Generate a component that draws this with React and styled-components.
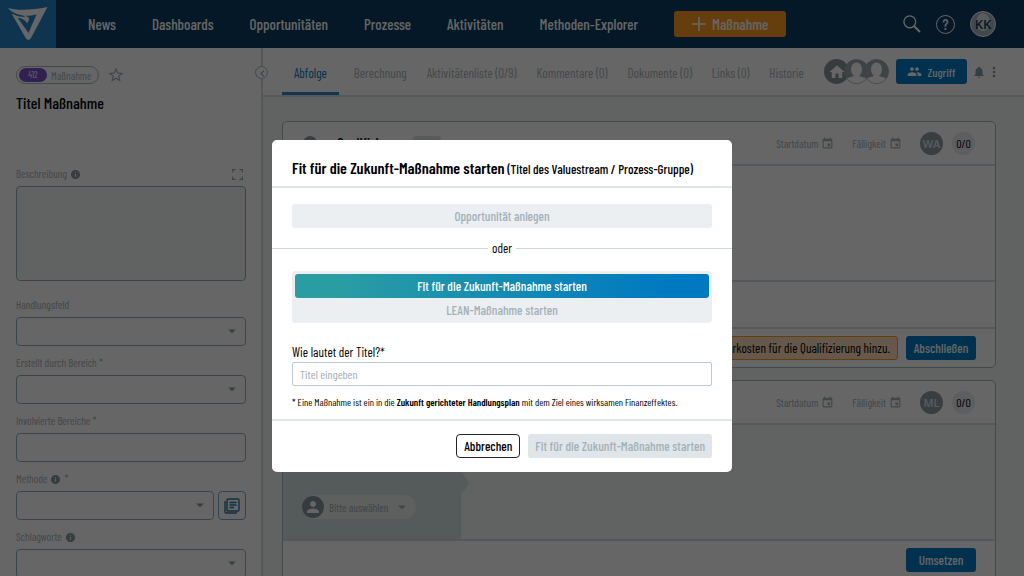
import React, { useState } from "react";
import styled, { createGlobalStyle } from "styled-components";
import {
  MdArrowDropDown,
  MdChevronLeft,
  MdEvent,
  MdHome,
  MdInfo,
  MdMoreVert,
  MdNotifications,
  MdPeople,
  MdPerson,
  MdStarBorder,
} from "react-icons/md";

const NAV = ["News", "Dashboards", "Opportunitäten", "Prozesse", "Aktivitäten", "Methoden-Explorer"];

const TABS = [
  "Abfolge",
  "Berechnung",
  "Aktivitätenliste (0/9)",
  "Kommentare (0)",
  "Dokumente (0)",
  "Links (0)",
  "Historie",
];

function Logo() {
  return (
    <svg width="40" height="34" viewBox="0 0 40 34" aria-hidden="true">
      <path
        fill="#fff"
        fillRule="evenodd"
        d="M0 1C10 4 25 3 39.500 0L23 31Q20.500 34.500 18 31.500L3.500 6.500C8 9 13 10 17.500 10L15 8.500C9 7.500 3 5 0 1ZM9.500 10.500L20.500 26L28.500 7.500C25 8.500 20 9 17 8.800C20 9.500 21.500 11 21 13L19 16.500C17.500 13 14 11.500 9.500 10.500Z"
      />
    </svg>
  );
}

function SearchIcon() {
  return (
    <svg width="18" height="18" viewBox="0 0 18 18" fill="none" stroke="currentColor" strokeWidth="1.400">
      <circle cx="6.800" cy="6.800" r="5.900" />
      <path d="M11 11l6 6" strokeWidth="2" />
    </svg>
  );
}

function PlusIcon() {
  return (
    <svg width="14" height="14" viewBox="0 0 14 14" stroke="currentColor" strokeWidth="1.600">
      <path d="M7 0v14M0 7h14" />
    </svg>
  );
}

function ExpandIcon() {
  return (
    <svg width="11" height="11" viewBox="0 0 11 11" fill="none" stroke="currentColor" strokeWidth="1.200">
      <path d="M.6 3.500V.6h2.900M7.500.6h2.900v2.900M10.400 7.500v2.900H7.500M3.500 10.400H.6V7.500" />
    </svg>
  );
}

function LibraryIcon() {
  return (
    <svg width="16" height="16" viewBox="0 0 16 16" fill="none" stroke="currentColor" strokeWidth="1.400">
      <rect x="3" y="1" width="12" height="12" rx="1" />
      <path d="M1 3v11q0 1 1 1h11M5.500 4.500h7M5.500 7h7M5.500 9.500h4.500" />
    </svg>
  );
}

function Face() {
  return (
    <svg width="25" height="25" viewBox="0 0 25 25" aria-hidden="true">
      <circle cx="12.500" cy="12.500" r="12" fill="#9caab0" stroke="#9caab0" />
      <path d="M3 19.500C6 17.500 10 18 10 16h5c0 2 4 1.500 7 3.500A12 12 0 0 1 3 19.500Z" fill="#fff" />
      <ellipse cx="12.500" cy="10.500" rx="5.500" ry="7" fill="#fff" />
    </svg>
  );
}

function Field({ id, label, info, required, kind = "select", action }) {
  return (
    <FieldBlock>
      <FieldLabel htmlFor={id}>
        {label}
        {info && <MdInfo size={11} />}
        {required && " *"}
      </FieldLabel>
      <FieldRow>
        {kind === "select" ? (
          <SelectBox>
            <Select id={id} defaultValue="">
              <option value=""></option>
            </Select>
            <MdArrowDropDown size={18} />
          </SelectBox>
        ) : (
          <TextBox id={id} type="text" />
        )}
        {action}
      </FieldRow>
    </FieldBlock>
  );
}

function StepHeader({ title, initials }) {
  return (
    <CardHeader>
      <StepDot />
      <StepTitle>{title}</StepTitle>
      <StepChip />
      <DateButton type="button">
        Startdatum <MdEvent size={13} />
      </DateButton>
      <DateButton type="button">
        Fälligkeit <MdEvent size={13} />
      </DateButton>
      <Owner>{initials}</Owner>
      <Counter>0/0</Counter>
    </CardHeader>
  );
}

function StartDialog() {
  const [mode, setMode] = useState("zukunft");
  const [title, setTitle] = useState("");

  return (
    <Overlay>
      <Dialog role="dialog" aria-modal="true" aria-labelledby="dialog-title">
        <DialogHeader>
          <DialogTitle id="dialog-title">
            Fit für die Zukunft-Maßnahme starten<small> (Titel des Valuestream / Prozess-Gruppe)</small>
          </DialogTitle>
        </DialogHeader>
        <DialogTop>
          <WideButton type="button">Opportunität anlegen</WideButton>
        </DialogTop>
        <Divider>oder</Divider>
        <DialogBody>
          <Switcher>
            <SwitchOption type="button" $active={mode === "zukunft"} onClick={() => setMode("zukunft")}>
              Fit für die Zukunft-Maßnahme starten
            </SwitchOption>
            <SwitchOption type="button" $active={mode === "lean"} onClick={() => setMode("lean")}>
              LEAN-Maßnahme starten
            </SwitchOption>
          </Switcher>
          <TitleLabel htmlFor="title">Wie lautet der Titel?*</TitleLabel>
          <TitleInput
            id="title"
            type="text"
            placeholder="Titel eingeben"
            value={title}
            onChange={(e) => setTitle(e.target.value)}
          />
          <Note>
            * Eine Maßnahme ist ein in die <b>Zukunft gerichteter Handlungsplan</b> mit dem Ziel eines wirksamen
            Finanzeffektes.
          </Note>
        </DialogBody>
        <DialogFooter>
          <CancelButton type="button">Abbrechen</CancelButton>
          <SubmitButton type="submit" disabled={!title}>
            Fit für die Zukunft-Maßnahme starten
          </SubmitButton>
        </DialogFooter>
      </Dialog>
    </Overlay>
  );
}

export default function App() {
  return (
    <Page>
      <GlobalStyle />
      <TopBar>
        <LogoLink href="#" aria-label="Start">
          <Logo />
        </LogoLink>
        <Nav>
          {NAV.map((item) => (
            <a key={item} href="#">
              {item}
            </a>
          ))}
        </Nav>
        <CreateButton type="button">
          <PlusIcon /> Maßnahme
        </CreateButton>
        <TopActions>
          <IconButton type="button" aria-label="Suche">
            <SearchIcon />
          </IconButton>
          <HelpButton type="button">?</HelpButton>
          <Profile type="button">KK</Profile>
        </TopActions>
      </TopBar>

      <Columns>
        <Sidebar>
          <Meta>
            <Pill>
              <PillId>412</PillId> Maßnahme
            </Pill>
            <IconButton type="button" aria-label="Favorit">
              <MdStarBorder size={18} />
            </IconButton>
          </Meta>
          <SideTitle>Titel Maßnahme</SideTitle>
          <FieldBlock>
            <LabelRow>
              <FieldLabel htmlFor="beschreibung">
                Beschreibung <MdInfo size={11} />
              </FieldLabel>
              <IconButton type="button" aria-label="Vergrößern">
                <ExpandIcon />
              </IconButton>
            </LabelRow>
            <Description id="beschreibung" />
          </FieldBlock>
          <Fields>
            <Field id="handlungsfeld" label="Handlungsfeld" />
            <Field id="bereich" label="Erstellt durch Bereich" required />
            <Field id="bereiche" label="Involvierte Bereiche" required kind="text" />
            <Field
              id="methode"
              label="Methode"
              info
              required
              action={
                <LibraryButton type="button" aria-label="Methoden">
                  <LibraryIcon />
                </LibraryButton>
              }
            />
            <Field id="schlagworte" label="Schlagworte" info />
          </Fields>
          <Collapse type="button" aria-label="Einklappen">
            <MdChevronLeft size={13} />
          </Collapse>
        </Sidebar>

        <Main>
          <TabBar>
            <Tabs>
              {TABS.map((tab, i) => (
                <Tab key={tab} href="#" $active={i === 0}>
                  {tab}
                </Tab>
              ))}
            </Tabs>
            <Avatars>
              <HomeAvatar>
                <MdHome size={18} />
              </HomeAvatar>
              <Face />
              <Face />
            </Avatars>
            <AccessButton type="button">
              <MdPeople size={15} /> Zugriff
            </AccessButton>
            <TabActions>
              <IconButton type="button" aria-label="Benachrichtigungen">
                <MdNotifications size={14} />
              </IconButton>
              <IconButton type="button" aria-label="Mehr">
                <MdMoreVert size={16} />
              </IconButton>
            </TabActions>
          </TabBar>

          <Content>
            <Card>
              <StepHeader title="Qualifizierung" initials="WA" />
              <CardBody />
              <CardRow />
              <CardFooter>
                <Hint>Mehrkosten für die Qualifizierung hinzu.</Hint>
                <ActionButton type="button">Abschließen</ActionButton>
              </CardFooter>
            </Card>
            <Card>
              <StepHeader initials="ML" />
              <CardBody $muted>
                <Assign>
                  <AssignButton type="button">
                    <AssignIcon>
                      <MdPerson size={18} />
                    </AssignIcon>
                    Bitte auswählen
                    <MdArrowDropDown size={18} />
                  </AssignButton>
                  <Arrow width="8" height="24" viewBox="0 0 8 24">
                    <path d="M0 0L8 12L0 24Z" fill="currentColor" />
                  </Arrow>
                </Assign>
              </CardBody>
              <CardFooter>
                <ActionButton type="button">Umsetzen</ActionButton>
              </CardFooter>
            </Card>
          </Content>
        </Main>
      </Columns>

      <StartDialog />
    </Page>
  );
}

const GlobalStyle = createGlobalStyle`
  * {
    box-sizing: border-box;
  }
  body {
    margin: 0;
  }
  body, button, input, select, textarea {
    font-family: "Barlow Condensed", "Roboto Condensed", "Liberation Sans Narrow", "Liberation Sans", sans-serif;
  }
  button {
    padding: 0;
    border: 0;
    background: none;
    color: inherit;
    cursor: pointer;
  }
  a {
    color: inherit;
    text-decoration: none;
  }
`;

const Page = styled.div`
  height: 100vh;
  display: flex;
  flex-direction: column;
  overflow: hidden;
  background: #fff;
`;

const TopBar = styled.header`
  flex: none;
  height: 48px;
  display: flex;
  align-items: center;
  background: #0a3d61;
  color: #fff;
`;

const LogoLink = styled.a`
  width: 56px;
  height: 48px;
  display: grid;
  place-items: center;
  background: #2382c8;
`;

const Nav = styled.nav`
  display: flex;
  gap: 36px;
  margin: 0 36px 0 32px;
  font-size: 15px;
  font-weight: 500;
  white-space: nowrap;
`;

const CreateButton = styled.button`
  width: 112px;
  height: 26px;
  display: flex;
  align-items: center;
  justify-content: center;
  gap: 6px;
  border-radius: 3px;
  background: #ff9820;
  color: #fff;
  font-size: 15px;
  font-weight: 500;
`;

const TopActions = styled.div`
  display: flex;
  align-items: center;
  gap: 15px;
  margin-left: auto;
  padding-right: 28px;
`;

const IconButton = styled.button`
  display: grid;
  place-items: center;
`;

const HelpButton = styled.button`
  width: 19px;
  height: 19px;
  border: 1px solid #fff;
  border-radius: 50%;
  font-size: 15px;
  font-weight: 500;
  line-height: 16px;
`;

const Profile = styled.button`
  width: 26px;
  height: 26px;
  border: 1px solid #fff;
  border-radius: 50%;
  background: radial-gradient(ellipse 7px 9px at 50% 42%, #dfe5e8 95%, #a9b6bb);
  color: #0a3d61;
  font-family: "Open Sans", sans-serif;
  font-size: 13px;
  font-weight: 600;
`;

const Columns = styled.div`
  flex: 1;
  min-height: 0;
  display: flex;
`;

const Sidebar = styled.aside`
  position: relative;
  flex: none;
  width: 263px;
  padding: 18px 15px 0 16px;
  border-right: 2px solid #d5dde1;
`;

const Collapse = styled.button`
  position: absolute;
  top: 18px;
  right: -7px;
  width: 13px;
  height: 13px;
  display: grid;
  place-items: center;
  border: 1px solid #a9b8bf;
  border-radius: 50%;
  background: #fff;
  color: #97a7ae;
`;

const Meta = styled.div`
  display: flex;
  align-items: center;
  gap: 8px;
  color: #a5b0b5;
`;

const Pill = styled.span`
  height: 18px;
  display: flex;
  align-items: center;
  gap: 4px;
  padding: 0 7px 0 2px;
  border: 1px solid #a9bbb9;
  border-radius: 9px;
  font-size: 11px;
`;

const PillId = styled.span`
  width: 28px;
  border-radius: 7px;
  background: #7c50c8;
  color: #fff;
  font-size: 9px;
  line-height: 14px;
  text-align: center;
`;

const SideTitle = styled.h1`
  margin: 8px 0 52px;
  font-size: 16px;
  line-height: 22px;
  font-weight: 500;
`;

const LabelRow = styled.div`
  display: flex;
  justify-content: space-between;
  align-items: center;
  padding-right: 3px;
  color: #9aa9b0;
`;

const FieldBlock = styled.div`
  display: flex;
  flex-direction: column;
  gap: 4px;
`;

const FieldLabel = styled.label`
  display: flex;
  align-items: center;
  gap: 3px;
  color: #a5b2b8;
  font-size: 11px;
  line-height: 16px;

  svg {
    color: #8b9ca5;
  }
`;

const Fields = styled.div`
  display: flex;
  flex-direction: column;
  gap: 9px;
  margin-top: 16px;
`;

const FieldRow = styled.div`
  display: flex;
  gap: 4px;
`;

const boxBorder = "1px solid #97afba";

const Description = styled.textarea`
  height: 95px;
  border: ${boxBorder};
  border-radius: 4px;
  background: #f3f8f6;
  resize: none;
`;

const TextBox = styled.input`
  width: 100%;
  height: 29px;
  border: ${boxBorder};
  border-radius: 4px;
  background: #fff;
`;

const SelectBox = styled.div`
  position: relative;
  flex: 1;

  svg {
    position: absolute;
    top: 5px;
    right: 5px;
    color: #8b9ca5;
    pointer-events: none;
  }
`;

const Select = styled.select`
  display: block;
  width: 100%;
  height: 29px;
  appearance: none;
  border: ${boxBorder};
  border-radius: 4px;
  background: #fff;
`;

const LibraryButton = styled.button`
  width: 28px;
  height: 29px;
  display: grid;
  place-items: center;
  border: 1px solid #77a9c8;
  border-radius: 4px;
  color: #2a78a8;
`;

const Main = styled.main`
  flex: 1;
  min-width: 0;
  background: #f3f8f6;
`;

const TabBar = styled.div`
  height: 49px;
  display: flex;
  align-items: center;
  padding: 0 22px 0 19px;
  border-bottom: 2px solid #d5dde1;
  background: #fff;
`;

const Tabs = styled.nav`
  align-self: stretch;
  display: flex;
  gap: 20px;
  white-space: nowrap;
`;

const Tab = styled.a`
  padding: ${(p) => (p.$active ? "0 12px" : "0")};
  margin-right: ${(p) => (p.$active ? "-5px" : "0")};
  border-bottom: 3px solid ${(p) => (p.$active ? "#2b8ac6" : "transparent")};
  color: ${(p) => (p.$active ? "#0079c0" : "#a9b4b9")};
  font-size: 13px;
  font-weight: 400;
  line-height: 50px;
`;

const Avatars = styled.div`
  display: flex;
  margin-left: auto;

  svg + svg {
    margin-left: -5px;
  }
`;

const HomeAvatar = styled.span`
  width: 25px;
  height: 25px;
  display: grid;
  place-items: center;
  margin-right: -5px;
  border-radius: 50%;
  background: #87969c;
  color: #fff;
`;

const AccessButton = styled.button`
  width: 71px;
  height: 25px;
  display: flex;
  align-items: center;
  justify-content: center;
  gap: 5px;
  margin: 0 5px 0 7px;
  border-radius: 3px;
  background: #007ac2;
  color: #fff;
  font-size: 12px;
  font-weight: 500;
`;

const TabActions = styled.div`
  display: flex;
  align-items: center;
  color: #8b9ca5;
`;

const Content = styled.div`
  display: flex;
  flex-direction: column;
  gap: 12px;
  padding: 24px 28px 0 19px;
`;

const Card = styled.section`
  border: 1px solid #a9b9bd;
  border-radius: 5px;
  background: #fff;
  overflow: hidden;
`;

const CardHeader = styled.header`
  height: 44px;
  display: flex;
  align-items: center;
  padding: 0 20px;
  border-bottom: 2px solid #d5dde1;
`;

const StepDot = styled.span`
  width: 14px;
  height: 14px;
  border-radius: 50%;
  background: #8b9ca5;
`;

const StepTitle = styled.h2`
  width: 76px;
  margin: 0 0 0 20px;
  font-size: 15px;
  font-weight: 500;
`;

const StepChip = styled.span`
  width: 28px;
  height: 14px;
  margin-right: auto;
  border-radius: 3px;
  background: #dbe2e6;
`;

const DateButton = styled.button`
  display: flex;
  align-items: center;
  gap: 3px;
  margin-right: 18px;
  color: #a3afb4;
  font-size: 11px;
`;

const Owner = styled.span`
  width: 23px;
  border-radius: 50%;
  background: #8e9da3;
  color: #dfe6e9;
  font-family: "Open Sans", sans-serif;
  font-size: 11px;
  font-weight: 600;
  line-height: 23px;
  text-align: center;
`;

const Counter = styled.span`
  width: 23px;
  margin-left: 9px;
  border-radius: 50%;
  background: #e6eaee;
  font-size: 12px;
  line-height: 23px;
  text-align: center;
`;

const CardBody = styled.div`
  height: 116px;
  display: flex;
  border-bottom: 2px solid #d5dde1;
  background: ${(p) => (p.$muted ? "#f3f8f6" : "#fff")};
`;

const CardRow = styled.div`
  height: 47px;
  border-bottom: 2px solid #d5dde1;
`;

const CardFooter = styled.footer`
  display: flex;
  justify-content: flex-end;
  align-items: center;
  gap: 8px;
  padding: 7px 19px;
`;

const Hint = styled.span`
  padding: 0 7px;
  border: 1px solid #ff9820;
  border-radius: 3px;
  background: #ffdcb8;
  font-size: 13px;
  line-height: 22px;
`;

const ActionButton = styled.button`
  width: 70px;
  height: 24px;
  border-radius: 3px;
  background: #007ac2;
  color: #fff;
  font-size: 13px;
  font-weight: 500;
`;

const Assign = styled.div`
  position: relative;
  width: 178px;
  display: flex;
  align-items: flex-end;
  padding: 0 0 20px 19px;
  background: #d5e0e2;
`;

const Arrow = styled.svg`
  position: absolute;
  top: 46px;
  left: 100%;
  color: #d5e0e2;
`;

const AssignButton = styled.button`
  height: 24px;
  display: flex;
  align-items: center;
  gap: 5px;
  padding-right: 5px;
  border-radius: 12px;
  background: #eaf0ef;
  color: #9aa9b0;
  font-size: 11px;
`;

const AssignIcon = styled.span`
  width: 22px;
  height: 22px;
  display: grid;
  place-items: center;
  border-radius: 50%;
  background: #84949b;
  color: #fff;
`;

const Overlay = styled.div`
  position: fixed;
  inset: 0;
  display: flex;
  align-items: center;
  justify-content: center;
  padding: 36px 20px 0 0;
  background: rgba(0, 0, 0, 0.6);
`;

const Dialog = styled.form`
  width: 460px;
  border-radius: 5px;
  background: #fff;
  color: #000;
`;

const DialogHeader = styled.header`
  padding: 17px 20px 7px;
  border-bottom: 2px solid #dfe5e9;
`;

const DialogTitle = styled.h2`
  margin: 0;
  font-size: 16px;
  line-height: 22px;
  font-weight: 600;
  white-space: nowrap;

  small {
    font-size: 13px;
    line-height: 16px;
    font-weight: 500;
  }
`;

const DialogTop = styled.div`
  padding: 16px 20px 10px;
`;

const WideButton = styled.button`
  width: 100%;
  height: 24px;
  border-radius: 3px;
  background: #ebeff2;
  color: #a4b1b6;
  font-size: 13px;
  font-weight: 500;
`;

const Divider = styled.div`
  display: flex;
  align-items: center;
  gap: 4px;
  font-size: 13px;
  line-height: 20px;

  &::before,
  &::after {
    content: "";
    flex: 1;
    height: 1px;
    background: #ccd6db;
  }
`;

const DialogBody = styled.div`
  display: flex;
  flex-direction: column;
  padding: 13px 20px 9px;
`;

const Switcher = styled.div`
  display: flex;
  flex-direction: column;
  padding: 3px 3px 1px;
  border-radius: 4px;
  background: #ebeff2;
`;

const SwitchOption = styled.button`
  height: 24px;
  border-radius: 3px;
  background: ${(p) => (p.$active ? "linear-gradient(90deg, #2a9da3 10%, #0079c1 90%)" : "none")};
  color: ${(p) => (p.$active ? "#fff" : "#a4b1b6")};
  font-size: 13px;
  font-weight: 500;
`;

const TitleLabel = styled.label`
  margin: 20px 0 1px;
  font-size: 13px;
  line-height: 18px;
`;

const TitleInput = styled.input`
  height: 24px;
  padding: 0 7px;
  border: 1px solid #bccad2;
  border-radius: 2px;
  font-size: 12px;

  &::placeholder {
    color: #9fadb4;
  }
`;

const Note = styled.p`
  margin: 8px 0 0;
  font-size: 10px;
  line-height: 16px;
  white-space: nowrap;

  b {
    font-weight: 600;
  }
`;

const DialogFooter = styled.footer`
  display: flex;
  justify-content: flex-end;
  gap: 8px;
  padding: 13px 20px 14px;
  border-top: 2px solid #dfe5e9;
`;

const CancelButton = styled.button`
  height: 24px;
  padding: 0 7px;
  border: 1px solid #222;
  border-radius: 4px;
  font-size: 13px;
  font-weight: 500;
`;

const SubmitButton = styled.button`
  height: 24px;
  padding: 0 7px;
  border-radius: 3px;
  background: #dfe5e9;
  color: #a4b1b6;
  font-size: 13px;
  font-weight: 500;
`;
